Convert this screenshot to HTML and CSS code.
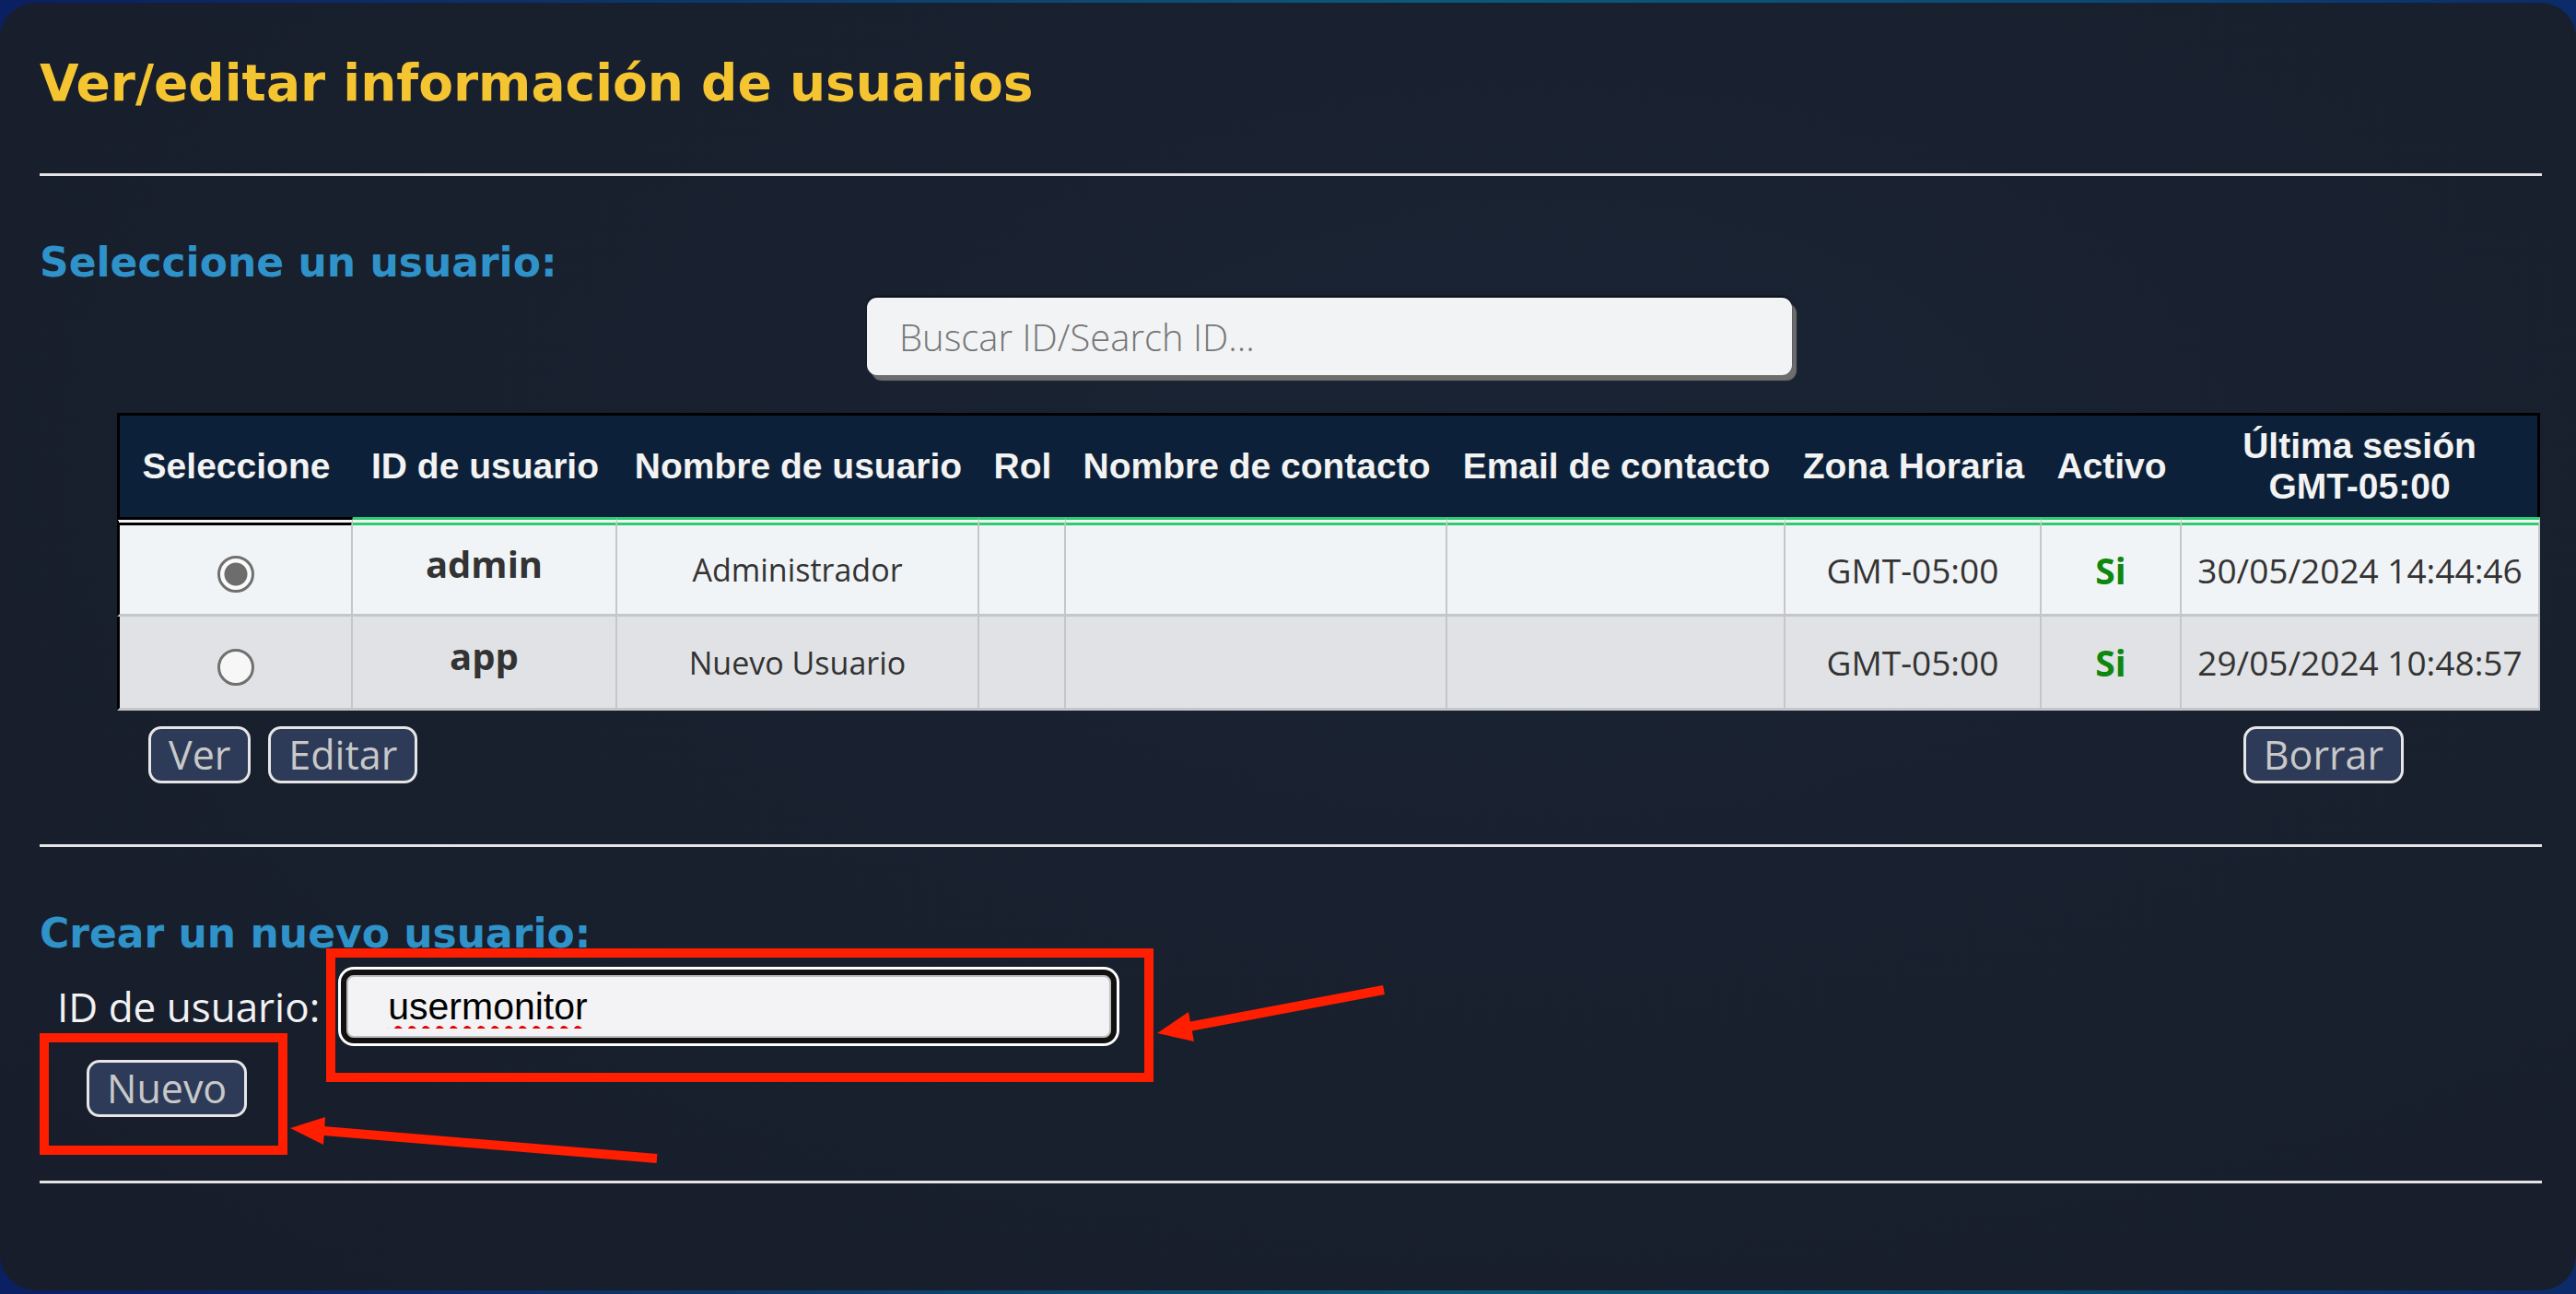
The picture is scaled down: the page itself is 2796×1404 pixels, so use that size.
FILE: index.html
```html
<!DOCTYPE html>
<html lang="es">
<head>
    <meta charset="utf-8">
    <title>Usuarios</title>
    <link rel="stylesheet" href="styles.css">
</head>
<body>
    <div class="panel">
        <h1 class="title">Ver/editar información de usuarios</h1>
        <hr class="rule">

        <h2 class="section">Seleccione un usuario:</h2>
        <div class="users">
            <div class="search-row">
                <input class="search" type="text" placeholder="Buscar ID/Search ID...">
            </div>

            <table class="user-table">
                <colgroup>
                    <col class="c-sel">
                    <col class="c-id">
                    <col class="c-name">
                    <col class="c-rol">
                    <col class="c-contact">
                    <col class="c-email">
                    <col class="c-zone">
                    <col class="c-active">
                    <col class="c-last">
                </colgroup>
                <thead>
                    <tr>
                        <th>Seleccione</th>
                        <th>ID de usuario</th>
                        <th>Nombre de usuario</th>
                        <th>Rol</th>
                        <th>Nombre de contacto</th>
                        <th>Email de contacto</th>
                        <th>Zona Horaria</th>
                        <th>Activo</th>
                        <th>Última sesión<br>GMT-05:00</th>
                    </tr>
                </thead>
                <tbody>
                    <tr>
                        <td><input class="pick" type="radio" name="user" checked></td>
                        <td class="uid">admin</td>
                        <td>Administrador</td>
                        <td></td>
                        <td></td>
                        <td></td>
                        <td class="num">GMT-05:00</td>
                        <td class="yes">Si</td>
                        <td class="num">30/05/2024 14:44:46</td>
                    </tr>
                    <tr>
                        <td><input class="pick" type="radio" name="user"></td>
                        <td class="uid">app</td>
                        <td>Nuevo Usuario</td>
                        <td></td>
                        <td></td>
                        <td></td>
                        <td class="num">GMT-05:00</td>
                        <td class="yes">Si</td>
                        <td class="num">29/05/2024 10:48:57</td>
                    </tr>
                </tbody>
            </table>

            <div class="actions">
                <div class="group">
                    <button class="btn">Ver</button>
                    <button class="btn">Editar</button>
                </div>
                <button class="btn">Borrar</button>
            </div>
        </div>
        <hr class="rule">

        <h2 class="section section-new">Crear un nuevo usuario:</h2>
        <div class="new-row">
            <label class="new-label" for="newid">ID de usuario:</label>
            <input class="new-id" id="newid" type="text" value="usermonitor">
        </div>
        <button class="btn btn-new">Nuevo</button>
        <hr class="rule rule-last">
    </div>

    <svg class="marks" width="2796" height="1404" viewBox="0 0 2796 1404">
        <rect x="359" y="1034" width="888" height="135" fill="none" stroke="#ff1e00" stroke-width="10"/>
        <rect x="48" y="1126" width="259" height="122" fill="none" stroke="#ff1e00" stroke-width="10"/>
        <line x1="1502" y1="1074" x2="1285" y2="1115" stroke="#ff1e00" stroke-width="10"/>
        <polygon points="1256,1121 1290,1098 1296,1130" fill="#ff1e00"/>
        <line x1="713" y1="1257" x2="345" y2="1226.5" stroke="#ff1e00" stroke-width="10"/>
        <polygon points="315,1224 353,1212 351,1242" fill="#ff1e00"/>
    </svg>
</body>
</html>
```

FILE: styles.css
```css
/* usuarios */

* {
    margin: 0;
    padding: 0;
    box-sizing: border-box;
}

html, body {
    width: 2796px;
    height: 1404px;
    overflow: hidden;
}

body {
    position: relative;
    background: linear-gradient(90deg, #0b1f63 0%, #0c3569 25%, #0d5779 55%, #0a4a76 80%, #0c2a69 100%);
    font-family: "Open Sans", "Noto Sans", sans-serif;
}

.panel {
    width: 2796px;
    height: 1397px;
    margin-top: 3px;
    padding: 56px 37px 0 43px;
    border-radius: 38px;
    background: radial-gradient(ellipse at 60% 35%, #1a2434 0%, #181f2d 55%, #171d2b 100%);
}

.title {
    font-family: "DejaVu Sans", Verdana, sans-serif;
    font-weight: bold;
    font-size: 55px;
    line-height: 63px;
    color: #f5c431;
}

.rule {
    border: 0;
    height: 3px;
    background: #e4e4e6;
    margin-top: 66px;
}

.section {
    font-family: "DejaVu Sans", Verdana, sans-serif;
    font-weight: bold;
    font-size: 44px;
    line-height: 51px;
    color: #2f92c8;
    margin-top: 68px;
}

.section-new {
    margin-top: 68px;
}

.users {
    padding-left: 84px;
}

.search-row {
    display: flex;
    justify-content: center;
    margin-top: 13px;
}

.search {
    width: 1004px;
    height: 84px;
    border: 0;
    border-radius: 11px;
    padding-left: 35px;
    background: #f2f3f5;
    box-shadow: 0 -2px 2px rgba(0, 0, 0, 0.5), 5px 6px 1px #6d6d6d;
    font-family: "Open Sans", sans-serif;
    font-weight: 300;
    font-size: 40px;
    color: #333;
    outline: none;
}

.search::placeholder {
    color: #767676;
}

/* tabla */

.user-table {
    width: 2630px;
    margin-top: 41px;
    table-layout: fixed;
    border-collapse: separate;
    border-spacing: 0;
}

.c-sel { width: 256px; }
.c-id { width: 287px; }
.c-name { width: 393px; }
.c-rol { width: 94px; }
.c-contact { width: 414px; }
.c-email { width: 367px; }
.c-zone { width: 278px; }
.c-active { width: 152px; }
.c-last { width: 389px; }

.user-table th {
    background: #0c2139;
    color: #f3f3f3;
    font-family: "Liberation Sans", Arial, sans-serif;
    font-weight: bold;
    font-size: 39px;
    line-height: 44px;
    padding: 11px 2px;
    white-space: nowrap;
    border-top: 3px solid #000;
}

.user-table th:first-child {
    border-left: 3px solid #000;
}

.user-table th:last-child {
    border-right: 3px solid #000;
}

.user-table td {
    height: 102px;
    padding: 0 6px;
    text-align: center;
    vertical-align: middle;
    font-size: 34px;
    color: #333;
    white-space: nowrap;
    border-right: 2px solid #c5c6c8;
    border-bottom: 3px solid #c5c6c8;
}

.user-table td:first-child {
    border-left: 3px solid #000;
}

.user-table tbody tr:first-child td {
    height: 108px;
    border-top: 9px double #2ecc71;
}

.user-table tbody tr:first-child td:first-child {
    border-top-color: #000;
}

.user-table tbody tr:nth-child(1) td {
    background: #f1f4f6;
}

.user-table tbody tr:nth-child(2) td {
    background: #e0e2e5;
}

.user-table .uid {
    font-weight: bold;
    font-size: 40px;
    padding-bottom: 14px;
}

.user-table .num {
    font-size: 37px;
}

.user-table .yes {
    font-weight: bold;
    font-size: 39px;
    color: #0d870d;
}

.pick {
    appearance: none;
    display: block;
    width: 40px;
    height: 40px;
    margin: 10px auto 0;
    border: 3px solid #707070;
    border-radius: 50%;
    background: #f7f7f7;
}

.pick:checked {
    background: radial-gradient(circle, #6d6d6d 0 12px, #fafafa 13px);
}

/* botones */

.actions {
    display: flex;
    justify-content: space-between;
    margin-top: 17px;
    padding: 0 150px 0 34px;
}

.actions .group {
    display: flex;
    gap: 19px;
}

.btn {
    font-family: "Open Sans", sans-serif;
    font-size: 43px;
    line-height: 56px;
    padding: 0 19px;
    color: #c8c8c8;
    background: #2d3b58;
    border: 3px solid #e6e6e6;
    border-radius: 14px;
}

.btn-new {
    margin: 18px 0 0 51px;
}

.new-row {
    display: flex;
    align-items: center;
    margin-top: 14px;
}

.new-label {
    font-size: 44px;
    color: #f2f2f2;
    margin: 0 23px 0 19px;
}

.new-id {
    width: 842px;
    height: 80px;
    border: 6px solid #111;
    border-radius: 14px;
    padding-left: 45px;
    background: #f3f3f5;
    box-shadow: 0 0 0 3px #fff, inset 0 0 0 2px #bdbdbd;
    font-family: "Liberation Sans", Arial, sans-serif;
    font-size: 41px;
    color: #000;
    outline: none;
    text-decoration: underline wavy #e60000;
    text-decoration-thickness: 3px;
    text-decoration-skip-ink: none;
    text-underline-offset: 7px;
}

.rule-last {
    margin-top: 69px;
}

.marks {
    position: absolute;
    top: 0;
    left: 0;
    pointer-events: none;
}
```
